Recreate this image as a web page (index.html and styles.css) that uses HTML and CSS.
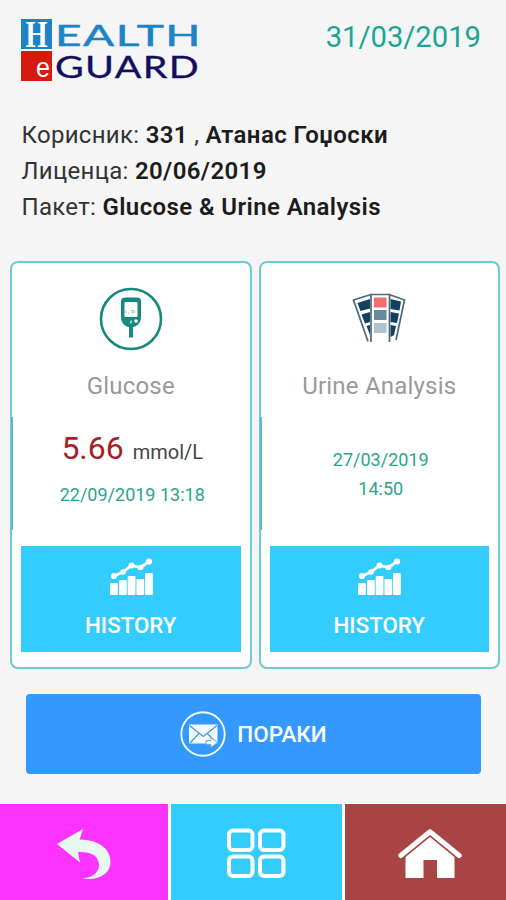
FILE: index.html
```
<!DOCTYPE html>
<html lang="mk">
<head>
    <meta charset="UTF-8">
    <meta name="viewport" content="width=device-width, initial-scale=1.0">
    <title>Health eGuard</title>
    <link rel="stylesheet" href="styles.css">
</head>
<body>

<header class="header">
    <svg class="logo" width="180" height="66" viewBox="0 0 180 66">
        <rect x="0" y="1" width="31" height="30" fill="#1b83c6"/>
        <rect x="0" y="33" width="31" height="30" fill="#d7190f"/>
        <text class="logo-h" x="4.5" y="28.5" textLength="22" lengthAdjust="spacingAndGlyphs">H</text>
        <text class="logo-e" x="15" y="59" textLength="14" lengthAdjust="spacingAndGlyphs">e</text>
        <text class="logo-health" x="34" y="27.5" textLength="147" lengthAdjust="spacingAndGlyphs">EALTH</text>
        <text class="logo-guard" x="34" y="59.5" textLength="145" lengthAdjust="spacingAndGlyphs">GUARD</text>
    </svg>
    <div class="today">31/03/2019</div>
</header>

<div class="user-info">
    <div>Корисник: <b>331</b> , <b>Атанас Гоџоски</b></div>
    <div class="licence">Лиценца: <b>20/06/2019</b></div>
    <div class="package">Пакет: <b>Glucose &amp; Urine Analysis</b></div>
</div>

<main class="cards">
    <section class="card">
        <svg class="card-icon" width="64" height="64" viewBox="0 0 64 64">
            <circle cx="32" cy="32" r="30" fill="none" stroke="#17897f" stroke-width="2.6"/>
            <path d="M26 10.500h12a4 4 0 0 1 4 4V30c0 6-4 9.500-8 10v10.500h-4V40c-4-.5-8-4-8-10V14.500a4 4 0 0 1 4-4z" fill="#17897f"/>
            <rect x="25.500" y="15" width="13" height="15" rx="1" fill="#fff"/>
            <path d="M27 26v-2.500m2 2.500h1.500m1.500-2.500h2v2.500h-2m3.500 0v-2.500" stroke="#8ebdb8" stroke-width=".9" fill="none"/>
            <circle cx="37" cy="34" r="1.800" fill="#fff"/>
            <path d="M31 34l2-1v3l-2 1z" fill="#9ccfca"/>
        </svg>
        <h2 class="card-title">Glucose</h2>
        <div class="reading">
            <div class="result"><span class="value">5.66</span> <span class="unit">mmol/L</span></div>
            <div class="taken">22/09/2019 13:18</div>
        </div>
        <button class="history-btn">
            <svg width="44" height="38" viewBox="0 0 44 38" fill="#fff">
                <rect x="1" y="25" width="7.800" height="12" rx="1"/>
                <rect x="10" y="22" width="7.800" height="15" rx="1"/>
                <rect x="18.700" y="18" width="7.800" height="19" rx="1"/>
                <rect x="27.400" y="21" width="7.800" height="16" rx="1"/>
                <rect x="36" y="15" width="7.800" height="22" rx="1"/>
                <path d="M5 18L14 14L22.500 7.500L31.500 9.500L40 3.500" fill="none" stroke="#fff" stroke-width="2.8"/>
                <circle cx="5" cy="18" r="3.100"/>
                <circle cx="14" cy="14" r="2.800"/>
                <circle cx="22.500" cy="7.500" r="3"/>
                <circle cx="31.500" cy="9.500" r="2.800"/>
                <circle cx="40" cy="3.500" r="3.100"/>
            </svg>
            <span>HISTORY</span>
        </button>
    </section>

    <section class="card">
        <svg class="card-icon" width="64" height="64" viewBox="0 0 64 64">
            <path d="M24 7.500L6.500 13L21 54.500M42 7.500l15.500 5.500L49 53" fill="none" stroke="#496b75" stroke-width="1.700"/>
            <path d="M10.500 16l12.500-4v9.500l-9.500 2.500zM14.500 27.500l8.500-2.500v10l-5 1.500zM19.500 39l3.500-1v10z" fill="#153f61"/>
            <path d="M43.500 12l10.500 2.500-1.500 9-9-1.500zM43.500 25l8.500 1.500-2 9.500-6.500-1zM43.500 38l5.500 1-2 9-3.500 2z" fill="#153f61"/>
            <path d="M24 55V7.500h18.500V55" fill="#fff" stroke="#496b75" stroke-width="1.700"/>
            <rect x="27" y="10.500" width="12.500" height="10" fill="#f26b71"/>
            <rect x="27" y="23" width="12.500" height="10" fill="#648a9c"/>
            <rect x="27" y="36" width="12.500" height="10" fill="#b1c2cf"/>
        </svg>
        <h2 class="card-title">Urine Analysis</h2>
        <div class="reading reading-date">
            <div class="taken">27/03/2019<br>14:50</div>
        </div>
        <button class="history-btn">
            <svg width="44" height="38" viewBox="0 0 44 38" fill="#fff">
                <rect x="1" y="25" width="7.800" height="12" rx="1"/>
                <rect x="10" y="22" width="7.800" height="15" rx="1"/>
                <rect x="18.700" y="18" width="7.800" height="19" rx="1"/>
                <rect x="27.400" y="21" width="7.800" height="16" rx="1"/>
                <rect x="36" y="15" width="7.800" height="22" rx="1"/>
                <path d="M5 18L14 14L22.500 7.500L31.500 9.500L40 3.500" fill="none" stroke="#fff" stroke-width="2.8"/>
                <circle cx="5" cy="18" r="3.100"/>
                <circle cx="14" cy="14" r="2.800"/>
                <circle cx="22.500" cy="7.500" r="3"/>
                <circle cx="31.500" cy="9.500" r="2.800"/>
                <circle cx="40" cy="3.500" r="3.100"/>
            </svg>
            <span>HISTORY</span>
        </button>
    </section>
</main>

<button class="messages-btn">
    <svg width="46" height="46" viewBox="0 0 46 46">
        <circle cx="23" cy="23" r="21.700" fill="none" stroke="#effcff" stroke-width="1.900"/>
        <rect x="9" y="13.500" width="28.500" height="19" fill="#effcff"/>
        <path d="M9.500 14.500L23.300 25.500L37 14.500M10 32l9-9.500M36.500 32l-9-9.500" fill="none" stroke="#4b91c4" stroke-width="1.100"/>
        <path d="M26 29.500h5v-3l6.500 5-6.500 5v-3h-5z" fill="#effcff" stroke="#6faadb" stroke-width="1"/>
    </svg>
    <span>ПОРАКИ</span>
</button>

<nav class="bottom-nav">
    <button class="nav-btn nav-back">
        <svg width="56" height="52" viewBox="0 0 56 52">
            <path d="M1 16L27 1L23.500 11.500C42 12 54.500 20 54.500 34C54.500 46 42 53 27 50.500C37 49.500 43.500 44 43 36C42 27 34 23.500 22 24L24 34.500Z" fill="#e6f8ef"/>
        </svg>
    </button>
    <button class="nav-btn nav-menu">
        <svg width="59" height="50" viewBox="0 0 59 50" fill="none" stroke="#fff" stroke-width="4">
            <rect x="2" y="2.500" width="23.500" height="19.500" rx="4"/>
            <rect x="33" y="2.500" width="23.500" height="19.500" rx="4"/>
            <rect x="2" y="28.500" width="23.500" height="19.500" rx="4"/>
            <rect x="33" y="28.500" width="23.500" height="19.500" rx="4"/>
        </svg>
    </button>
    <button class="nav-btn nav-home">
        <svg width="64" height="50" viewBox="0 0 64 50">
            <path d="M2.800 26.500L32 2.800L61.200 26.500" fill="none" stroke="#fff" stroke-width="5" stroke-linecap="round" stroke-linejoin="round"/>
            <path d="M7.500 27L32 7L56.500 27V49H39V31H25.500V49H7.500Z" fill="#fff"/>
            <path d="M6.500 28L32 7.300L57.500 28" fill="none" stroke="#a94340" stroke-width="1.300"/>
        </svg>
    </button>
</nav>

</body>
</html>
```
FILE: styles.css
```
* {
    box-sizing: border-box;
}

body {
    margin: 0;
    height: 900px;
    display: flex;
    flex-direction: column;
    background-color: #f5f5f5;
    font-family: Roboto, "Noto Sans", sans-serif;
    overflow: hidden;
}

button {
    border: none;
    padding: 0;
    font-family: inherit;
    cursor: pointer;
}

svg {
    display: block;
}

.header {
    display: flex;
    justify-content: space-between;
    height: 117px;
    padding: 18px 25px 0 21px;
}

.logo {
    overflow: visible;
    font-family: Lato, sans-serif;
}

.logo-h {
    font-family: "Liberation Serif", serif;
    font-size: 38px;
    font-weight: bold;
    fill: #fff;
}

.logo-e {
    font-family: "Liberation Sans", sans-serif;
    font-size: 28px;
    fill: #fff;
}

.logo-health {
    font-size: 29.5px;
    letter-spacing: 1px;
    fill: #1b83c6;
    stroke: #1b83c6;
    stroke-width: .5px;
}

.logo-guard {
    font-size: 30px;
    letter-spacing: 1px;
    fill: #120e60;
    stroke: #120e60;
    stroke-width: .3px;
}

.today {
    font-size: 29.2px;
    line-height: 38px;
    color: #1aa595;
}

.user-info {
    height: 144px;
    padding-left: 21.5px;
    font-size: 24px;
    line-height: 36px;
    letter-spacing: .3px;
    color: #333;
    white-space: nowrap;
}

.user-info b {
    font-weight: 600;
    letter-spacing: .4px;
    color: #1c1c1c;
}

.cards {
    display: grid;
    grid-template-columns: 1fr 1fr;
    gap: 7px;
    height: 408px;
    padding: 0 6px 0 10px;
}

.card {
    position: relative;
    display: flex;
    flex-direction: column;
    align-items: center;
    padding: 24px 9px 0;
    border: 2px solid #6ccbd3;
    border-radius: 8px;
    background: #fff;
}

/* darker stretch of the left border */
.card::before {
    content: "";
    position: absolute;
    left: -1px;
    top: 154px;
    width: 2px;
    height: 113px;
    background: #62b7c9;
}

.card-title {
    margin: 19px 0 0;
    font-size: 24px;
    font-weight: 400;
    line-height: 32px;
    letter-spacing: .2px;
    color: #999;
}

.reading {
    height: 144px;
    padding-top: 26px;
    padding-left: 3px;
    text-align: center;
}

.reading-date {
    padding-top: 43px;
}

.result {
    line-height: 40px;
}

.value {
    margin-right: 5px;
    font-size: 32px;
    color: #a91d28;
}

.unit {
    font-size: 20px;
    color: #444;
}

.taken {
    font-size: 18px;
    line-height: 29px;
    color: #2aa58a;
}

.result + .taken {
    margin-top: 6px;
}

.history-btn {
    display: flex;
    flex-direction: column;
    align-items: center;
    width: 100%;
    height: 106px;
    padding-top: 12px;
    background-color: #33ccff;
    color: #fff;
    font-size: 22.3px;
    font-weight: 500;
}

.history-btn span {
    margin-top: 16px;
}

.messages-btn {
    display: flex;
    align-items: center;
    justify-content: center;
    gap: 11px;
    height: 80px;
    margin: 25px 25px 0 26px;
    border-radius: 4px;
    background-color: #3399ff;
    color: #fff;
    font-size: 22.5px;
    font-weight: 500;
}

.bottom-nav {
    display: grid;
    grid-template-columns: 168px 171px 1fr;
    gap: 3px;
    height: 97px;
    margin-top: auto;
    border-top: 1px solid #fff;
    background: #fff;
}

.nav-btn {
    display: flex;
    justify-content: center;
    padding-top: 24px;
}

.nav-back {
    background-color: #ff33ff;
}

.nav-menu {
    background-color: #33ccff;
}

.nav-home {
    padding-top: 25px;
    padding-left: 8px;
    background-color: #aa4343;
}
```
